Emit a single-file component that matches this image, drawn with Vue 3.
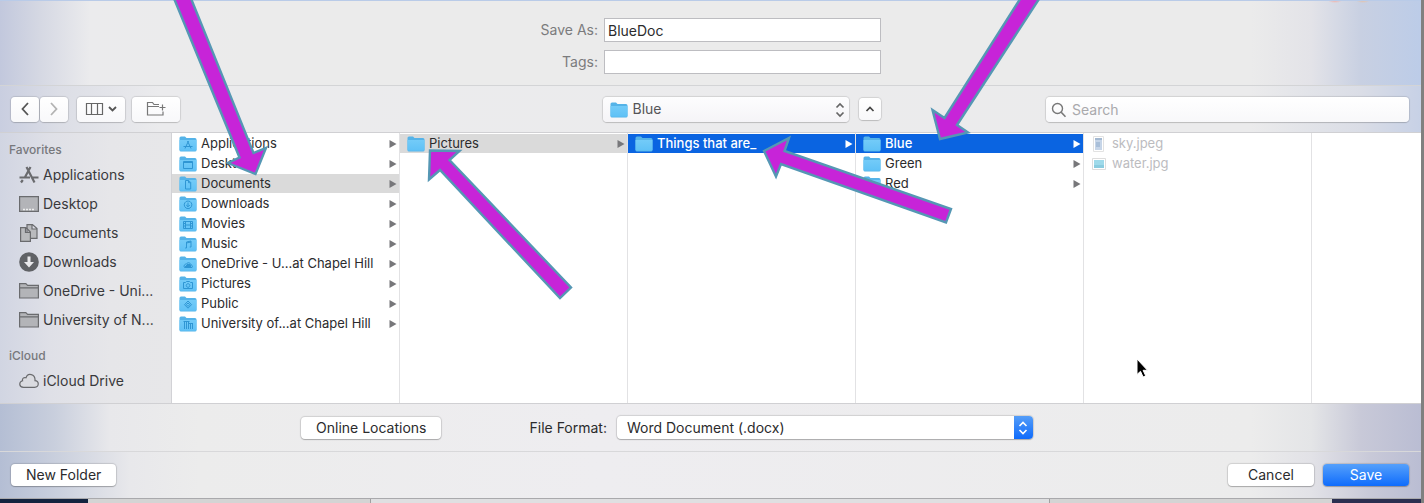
<script setup>
import { ref } from 'vue'

const fileName = ref('BlueDoc')
const tags = ref('')
const search = ref('')

const favorites = [
  { name: 'Applications', icon: 'apps' },
  { name: 'Desktop', icon: 'desktop' },
  { name: 'Documents', icon: 'docs' },
  { name: 'Downloads', icon: 'down' },
  { name: 'OneDrive - Uni...', icon: 'folder' },
  { name: 'University of N...', icon: 'folder' },
]

const columns = [
  [
    { name: 'Applications', glyph: 'apps' },
    { name: 'Desktop', glyph: 'desktop' },
    { name: 'Documents', glyph: 'doc', state: 'path' },
    { name: 'Downloads', glyph: 'down' },
    { name: 'Movies', glyph: 'film' },
    { name: 'Music', glyph: 'note' },
    { name: 'OneDrive - U...at Chapel Hill', glyph: 'cloud' },
    { name: 'Pictures', glyph: 'camera' },
    { name: 'Public', glyph: 'sign' },
    { name: 'University of...at Chapel Hill', glyph: 'building' },
  ],
  [{ name: 'Pictures', state: 'path' }],
  [{ name: 'Things that are_', state: 'active' }],
  [{ name: 'Blue', state: 'active' }, { name: 'Green' }, { name: 'Red' }],
]

const files = [
  { name: 'sky.jpeg', kind: 'tall' },
  { name: 'water.jpg', kind: 'wide' },
]

const glyphs = {
  apps: 'M9.500 5 6 12.500M8.500 5l3.500 7.500M4.500 10.500h9',
  desktop: 'M4.500 5.500h9v7h-9zM4.500 6.500h9',
  doc: 'M6.500 4.500h3.200l2 2v6.500h-5.200zM9.500 4.700v2h2',
  down: 'M9 5a3.800 3.800 0 1 0 .1 0M9 6.500v4M7.200 9 9 10.800 10.800 9',
  film: 'M4.500 5.500h9v7h-9zM6.500 5.500v7M11.500 5.500v7M6.500 9h5M4.500 7.500h2M4.500 10h2M11.500 7.500h2M11.500 10h2',
  note: 'M7.500 12V6l4.500-1v6M6.200 12h1.300M10.700 11H12M7.500 7l4.500-1',
  cloud: 'M5.500 11.500h7.500c1-1.500 0-2.500-1-2.500-.5-2.500-3.500-3-4.500-1-2-.2-3.200 2-2 3.500zM6 10.500h6M7 9.500h5M8 8.500h3',
  camera: 'M4.500 6.500h2l1-1h3l1 1h2v6h-9zM9 7.700a1.800 1.800 0 1 0 .1 0',
  sign: 'M9 5l3.500 3.700L9 12.200 5.500 8.700zM9 7l1.700 1.700L9 10.400 7.300 8.700z',
  building: 'M4.500 5.500h6M5.500 6v7M7.500 6v7M9.500 6v7M11.500 7v6M13.500 7v6M10 7.500h4',
}

const arrows = [
  '173,-4 239.500,157.500 228,163 255.500,174 266,148 253.500,153 190,-4',
  '430,150.500 459.500,151 449.500,160 571,287.500 560,298 440,170 429,179.500',
  '764,151 789,138 784.500,151 951,209 946,222.500 781,164 776,176.500',
  '1022,-4 944.500,118 932.500,110 940,139 968,132.500 957,125 1041,-4',
]
</script>

<template>
  <main class="screen">
    <form class="dialog" @submit.prevent>
      <section class="naming">
        <label for="name">Save As:</label>
        <input id="name" v-model="fileName" type="text" />
        <label for="tags">Tags:</label>
        <input id="tags" v-model="tags" type="text" />
      </section>

      <section class="toolbar">
        <div class="tools">
          <div class="nav">
            <button type="button" class="tool step" aria-label="Back">
              <svg width="10" height="16" viewBox="0 0 10 16"><path d="M8 2 2.500 8 8 14" stroke="#555" stroke-width="1.800" /></svg>
            </button>
            <button type="button" class="tool step" aria-label="Forward">
              <svg width="10" height="16" viewBox="0 0 10 16"><path d="M2 2l5.500 6L2 14" stroke="#b3b3b3" stroke-width="1.800" /></svg>
            </button>
          </div>
          <button type="button" class="tool wide" aria-label="View">
            <svg width="32" height="14" viewBox="0 0 32 14">
              <path d="M1.500 1.500h16v11h-16zM6.500 1.500v11M12.500 1.500v11" stroke="#666" stroke-width="1.200" />
              <path d="M24 5l3.500 3.500L31 5" stroke="#555" stroke-width="1.800" />
            </svg>
          </button>
          <button type="button" class="tool wide" aria-label="Group">
            <svg width="20" height="16" viewBox="0 0 20 16">
              <path d="M13 3.500H8L6.500 1.500h-5v12.500h15.500V10.500M1.500 5.500h11.500M16.500 3.500v6M13.500 6.500h6" stroke="#777" stroke-width="1.200" />
            </svg>
          </button>
        </div>
        <div class="place">
          <div class="place-select">
            <svg class="folder" width="18" height="16" viewBox="0 0 18 16"><use href="#folder" /></svg>
            <select aria-label="Location"><option>Blue</option></select>
            <svg class="updown" width="10" height="16" viewBox="0 0 10 16"><path d="M1.500 5.500 5 2l3.500 3.500M1.500 10.500 5 14l3.500-3.500" stroke="#666" stroke-width="1.700" /></svg>
          </div>
          <button type="button" class="tool collapse" aria-label="Collapse">
            <svg width="10" height="8" viewBox="0 0 10 8"><path d="M1.500 6 5 2.500 8.500 6" stroke="#444" stroke-width="1.700" /></svg>
          </button>
        </div>
        <div class="search">
          <svg width="16" height="16" viewBox="0 0 16 16"><circle cx="6.500" cy="6.500" r="5" stroke="#777" stroke-width="1.400" /><path d="m10.200 10.200 4.300 4.500" stroke="#777" stroke-width="1.600" /></svg>
          <input v-model="search" type="search" placeholder="Search" aria-label="Search" />
        </div>
      </section>

      <section class="browser">
        <nav class="sidebar">
          <h2>Favorites</h2>
          <ul>
            <li v-for="f in favorites" :key="f.name">
              <a href="#">
                <svg width="20" height="20" viewBox="0 0 20 20">
                  <g v-if="f.icon === 'apps'" stroke="#6a6b6e" stroke-width="2.200">
                    <path d="M7.500 2 15.500 17.500M11.500 2 5.800 12.500M.5 12.500h10.500M13.500 12.500h6M3.800 15l-1.800 2.500" />
                  </g>
                  <g v-else-if="f.icon === 'desktop'">
                    <path d="M.6 2.600h18.800v14.800H.6z" fill="#b3b4b8" stroke="#6a6b6e" stroke-width="1.200" />
                    <path d="M4 15.500h12" stroke="#eee" stroke-width="1.500" stroke-dasharray="2 1" />
                  </g>
                  <g v-else-if="f.icon === 'docs'" fill="#b9babd" stroke="#6a6b6e" stroke-width="1.200">
                    <path d="M8 1.600h5.500l4.500 4v9.800H8zM13 1.800V6h4.500" />
                    <path d="M1.600 4.600H7L11.400 9v9.400H1.600zM6.500 4.800V9.500H11" />
                  </g>
                  <g v-else-if="f.icon === 'down'">
                    <circle cx="10" cy="10" r="9.800" fill="#606266" />
                    <path d="M8.500 4.500h3V10H15l-5 5.500L5 10h3.500z" fill="#e9e9ec" />
                  </g>
                  <g v-else fill="#b3b4b8" stroke="#6a6b6e" stroke-width="1.200">
                    <path d="M.6 17V2.600h6.200l1.800 1.800h10.800V17zM.6 6.800h18.800" />
                  </g>
                </svg>
                <span>{{ f.name }}</span>
              </a>
            </li>
          </ul>
          <h2>iCloud</h2>
          <ul>
            <li>
              <a href="#">
                <svg width="20" height="20" viewBox="0 0 20 20"><path d="M4.500 16.400h11c5-.4 4.800-6.400.5-6.800C16.500 2.500 8.500 1.500 7 6.800 4.800 5.900 3 7.600 3.600 9.800-.4 11-.2 16 4.500 16.400z" fill="#dadbe0" stroke="#6a6b6e" stroke-width="1.200" /></svg>
                <span>iCloud Drive</span>
              </a>
            </li>
          </ul>
        </nav>

        <ul v-for="(col, i) in columns" :key="i" class="column">
          <li v-for="item in col" :key="item.name">
            <button type="button" class="row" :class="item.state">
              <svg class="folder" width="18" height="16" viewBox="0 0 18 16">
                <use href="#folder" />
                <path v-if="item.glyph" :d="glyphs[item.glyph]" stroke="#2f96d4" stroke-width="1" />
              </svg>
              <span class="text">{{ item.name }}</span>
              <svg class="caret" width="8" height="8" viewBox="0 0 8 8"><path d="M.5 0v8L7.500 4z" fill="currentColor" /></svg>
            </button>
          </li>
        </ul>
        <ul class="column files">
          <li v-for="file in files" :key="file.name">
            <button type="button" class="row" disabled>
              <svg width="14" height="16" viewBox="0 0 14 16">
                <g v-if="file.kind === 'tall'">
                  <path d="M1.500 .5h10v15h-10z" fill="#fff" stroke="#e2e2e2" />
                  <path d="M3 2h7v12H3z" fill="#c6d5e8" />
                  <path d="M3 2h7v2H3z" fill="#a3b8d1" />
                  <path d="M4 6h4v5H4z" fill="#a9bfd9" />
                </g>
                <g v-else>
                  <path d="M.5 2.500h13v11H.5z" fill="#fff" stroke="#ddd" />
                  <path d="M2 4h10v8H2z" fill="#9fdaea" />
                  <path d="M2 9h10v3H2z" fill="#8bccdf" />
                </g>
              </svg>
              <span class="text">{{ file.name }}</span>
            </button>
          </li>
        </ul>
        <div class="column rest"></div>
      </section>

      <section class="format">
        <button type="button" class="push">Online Locations</button>
        <div class="format-field">
          <label for="format">File Format:</label>
          <div class="format-select">
            <select id="format"><option>Word Document (.docx)</option></select>
            <span class="cap">
              <svg width="10" height="16" viewBox="0 0 10 16"><path d="M1.500 6 5 2.500 8.500 6M1.500 10 5 13.500 8.500 10" stroke="#fff" stroke-width="1.600" /></svg>
            </span>
          </div>
        </div>
      </section>

      <section class="actions">
        <button type="button" class="push new">New Folder</button>
        <button type="button" class="push cancel">Cancel</button>
        <button type="submit" class="push save">Save</button>
      </section>
    </form>

    <div class="behind"><i class="dark"></i><i class="left"></i><i class="page"></i><i class="right"></i><i class="dark end"></i></div>

    <svg class="defs" width="0" height="0" aria-hidden="true">
      <defs>
        <linearGradient id="sky" x1="0" y1="0" x2="0" y2="1">
          <stop offset="0" stop-color="#73cbf8" />
          <stop offset="1" stop-color="#5fc1f6" />
        </linearGradient>
        <g id="folder">
          <path d="M.5 2q0-1.500 1.500-1.500h4l1.500 1.500H16q1.500 0 1.500 1.500V14q0 1.500-1.500 1.500H2Q.5 15.500.5 14z" fill="#55b3e8" />
          <path d="M.5 4H17.500v9.800q0 1-1.500 1H2q-1.500 0-1.500-1z" fill="url(#sky)" />
        </g>
      </defs>
    </svg>

    <svg class="annotations" width="1424" height="503" viewBox="0 0 1424 503" aria-hidden="true">
      <polygon v-for="a in arrows" :key="a" :points="a" fill="#c724d8" stroke="#5597b4" stroke-width="2.400" />
      <path d="M1137 359v15.500l3.500-3.200 2.600 5.700 2.600-1.200-2.600-5.500h4.400z" fill="#000" stroke="#fff" stroke-width="1" />
    </svg>
  </main>
</template>

<style>
body {
  margin: 0;
}
</style>

<style scoped>
.screen {
  position: relative;
  overflow: hidden;
  font: 14px/20px Inter, "Liberation Sans", sans-serif;
  color: #2b2b2d;
  background: #808080;
}
.screen * {
  box-sizing: border-box;
}
.screen svg {
  fill: none;
  flex: none;
}
.dialog {
  margin-right: 3px;
  border-top: 1px solid #b9cbe8;
  background: #ececec;
}
button,
input,
select {
  font: inherit;
  color: inherit;
  margin: 0;
  border: 0;
  outline: 0;
  appearance: none;
}
ul {
  list-style: none;
  margin: 0;
  padding: 0;
}
.naming {
  display: grid;
  grid-template-columns: 58px 277px;
  gap: 8px 6px;
  justify-content: center;
  align-items: center;
  padding: 17px 0 11px;
  border-bottom: 1px solid #d3d4d6;
  background:
    radial-gradient(7px 2px at calc(100% - 86px) 0, #f0b5ae, transparent),
    radial-gradient(7px 2px at calc(100% - 58px) 0, #e3c3ad, transparent),
    linear-gradient(90deg, #c2c8dd, #d5d8e3 40px, #ebebed 90px, #ebebeb 250px, #ebebeb calc(100% - 170px), #e3e3e8 calc(100% - 110px), #c8d0e2 calc(100% - 60px), #bccce8);
}
.naming label {
  color: #7b7b7d;
  text-align: right;
  white-space: nowrap;
}
.naming input {
  height: 24px;
  padding: 0 3px;
  border: 1px solid #bdbdc1;
  background: #fff;
}
.toolbar {
  display: grid;
  grid-template-columns: 593fr 278px 528fr;
  align-items: center;
  height: 47px;
  padding: 0 12px 0 11px;
  border-bottom: 1px solid #d0d0d3;
  background: linear-gradient(90deg, #c9cee0, #dcdee6 60px, #ebebed 160px, #ebebec calc(100% - 170px), #dadde6 calc(100% - 60px), #c7d1e6);
}
.tools,
.nav,
.place,
.format,
.format-field,
.actions {
  display: flex;
  align-items: center;
}
.tools {
  gap: 7px;
}
.nav {
  gap: 1px;
  margin-right: 2px;
}
.tool {
  display: flex;
  align-items: center;
  justify-content: center;
  height: 25px;
  padding: 0;
  border-radius: 4px;
  background: linear-gradient(#fff, #f8f8fa);
  box-shadow: 0 0 1px 1px #0000001c, 0 1px 1px #0000001c;
}
.step {
  width: 28px;
}
.wide {
  width: 48px;
}
.place {
  gap: 10px;
}
.place-select {
  position: relative;
  flex: 1;
}
.place-select select {
  display: block;
  width: 100%;
  height: 25px;
  padding: 0 24px 0 29px;
  border-radius: 4px;
  color: #555558;
  background: linear-gradient(#fdfdfe, #f5f4f7);
  box-shadow: 0 0 1px 1px #0000001c, 0 1px 1px #0000001c;
}
.place-select .folder {
  position: absolute;
  left: 7px;
  top: 5px;
}
.updown {
  position: absolute;
  right: 4px;
  top: 5px;
}
.collapse {
  width: 22px;
  height: 22px;
}
.search {
  position: relative;
  justify-self: end;
  width: 363px;
}
.search svg {
  position: absolute;
  left: 5px;
  top: 5px;
}
.search input {
  display: block;
  width: 100%;
  height: 25px;
  padding: 0 8px 0 26px;
  border-radius: 4px;
  background: linear-gradient(#fff, #f8f8fa);
  box-shadow: 0 0 1px 1px #0000001c, 0 1px 1px #0000001c;
}
.search input::placeholder {
  color: #a9a9ac;
  opacity: 1;
}
.browser {
  display: flex;
  min-height: 271px;
  border-bottom: 1px solid #d0d0d3;
  background: #fff;
}
.sidebar {
  flex: none;
  width: 172px;
  padding: 7px 0 8px;
  border-right: 1px solid #d2d2d6;
  color: #39393c;
  background: linear-gradient(90deg, #d1d5e2, #dfe0e7 50px, #e6e6e9 110px, #e7e7e9);
}
.sidebar h2 {
  margin: 0;
  padding-left: 9px;
  font-size: 12px;
  line-height: 20px;
  font-weight: 500;
  color: #77787c;
}
.sidebar ul + h2 {
  margin-top: 12px;
}
.sidebar a {
  display: flex;
  align-items: center;
  gap: 4px;
  height: 29px;
  padding-left: 19px;
  color: inherit;
  text-decoration: none;
  white-space: nowrap;
}
.column {
  flex: none;
  width: 228px;
  border-right: 1px solid #e2e2e4;
}
.rest {
  flex: 1;
  border: 0;
}
.row {
  display: flex;
  align-items: center;
  gap: 4px;
  width: 100%;
  height: 20px;
  padding: 0 2px 0 7px;
  border-top: 1px solid transparent;
  background: none padding-box;
  font-size: 13px;
  line-height: 19px;
  text-align: left;
  white-space: nowrap;
}
.row .text {
  flex: 1;
}
.caret {
  color: #77777a;
}
.path {
  background-color: #dadada;
}
.active {
  color: #fff;
  font-weight: 500;
  background-color: #0a64e1;
}
.active .caret {
  color: #fff;
}
.files .row {
  gap: 6px;
  padding-left: 8px;
  color: #bcbcbf;
}
.format {
  justify-content: center;
  gap: 88px;
  height: 48px;
  padding-right: 87px;
  border-bottom: 1px solid #d8d8da;
  background: linear-gradient(90deg, #b4bed4, #c9cfdd 55px, #e8e8eb 110px, #ececec 200px, #eeedf0 600px, #ececec calc(100% - 170px), #e4e5e7 calc(100% - 110px), #c8c9d8 calc(100% - 60px), #babdd3);
}
.format-field {
  gap: 10px;
}
.format-select {
  position: relative;
  width: 416px;
}
.format-select select {
  display: block;
  width: 100%;
  height: 23px;
  padding: 0 28px 0 10px;
  border-radius: 4px;
  background: #fff;
  box-shadow: 0 0 1px 1px #00000020, 0 1px 1px #00000030;
}
.cap {
  position: absolute;
  top: 0;
  right: 0;
  display: flex;
  align-items: center;
  justify-content: center;
  width: 19px;
  height: 23px;
  border-radius: 0 4px 4px 0;
  background: linear-gradient(#549df8, #0f6bfb);
  pointer-events: none;
}
.push {
  height: 22px;
  padding: 0 15px;
  border-radius: 4px;
  background: #fff;
  box-shadow: 0 0 1px 1px #00000020, 0 1px 1px #00000030;
  white-space: nowrap;
}
.actions {
  gap: 9px;
  height: 46px;
  padding: 0 12px 0 11px;
  background: linear-gradient(90deg, #b4bed4, #c9cfdd 55px, #e8e8eb 130px, #ececec 200px, #eeedf0 600px, #ececec calc(100% - 170px), #e2e2e7 calc(100% - 110px), #c8c9d8 calc(100% - 50px), #babdd3);
}
.new {
  margin-right: auto;
}
.cancel,
.save {
  width: 86px;
}
.save {
  color: #fff;
  background: linear-gradient(#55a0fb, #0f6cfc);
}
.behind {
  display: flex;
  height: 5px;
  margin-right: 3px;
  border-top: 1px solid #a9a9ac;
}
.behind i {
  flex: none;
  background: #d4d4d4;
}
.behind .dark {
  width: 88px;
  background: #13233f;
}
.behind .left {
  width: 283px;
  border-right: 1px solid #a0a0a0;
}
.behind .page {
  flex: 1;
  background: #dfdfe1;
}
.behind .right {
  width: 283px;
  border-left: 1px solid #a0a0a0;
}
.behind .end {
  width: 89px;
  background: #2b2f50;
}
.defs {
  position: absolute;
}
.annotations {
  position: absolute;
  left: 0;
  top: 0;
  pointer-events: none;
}
</style>
